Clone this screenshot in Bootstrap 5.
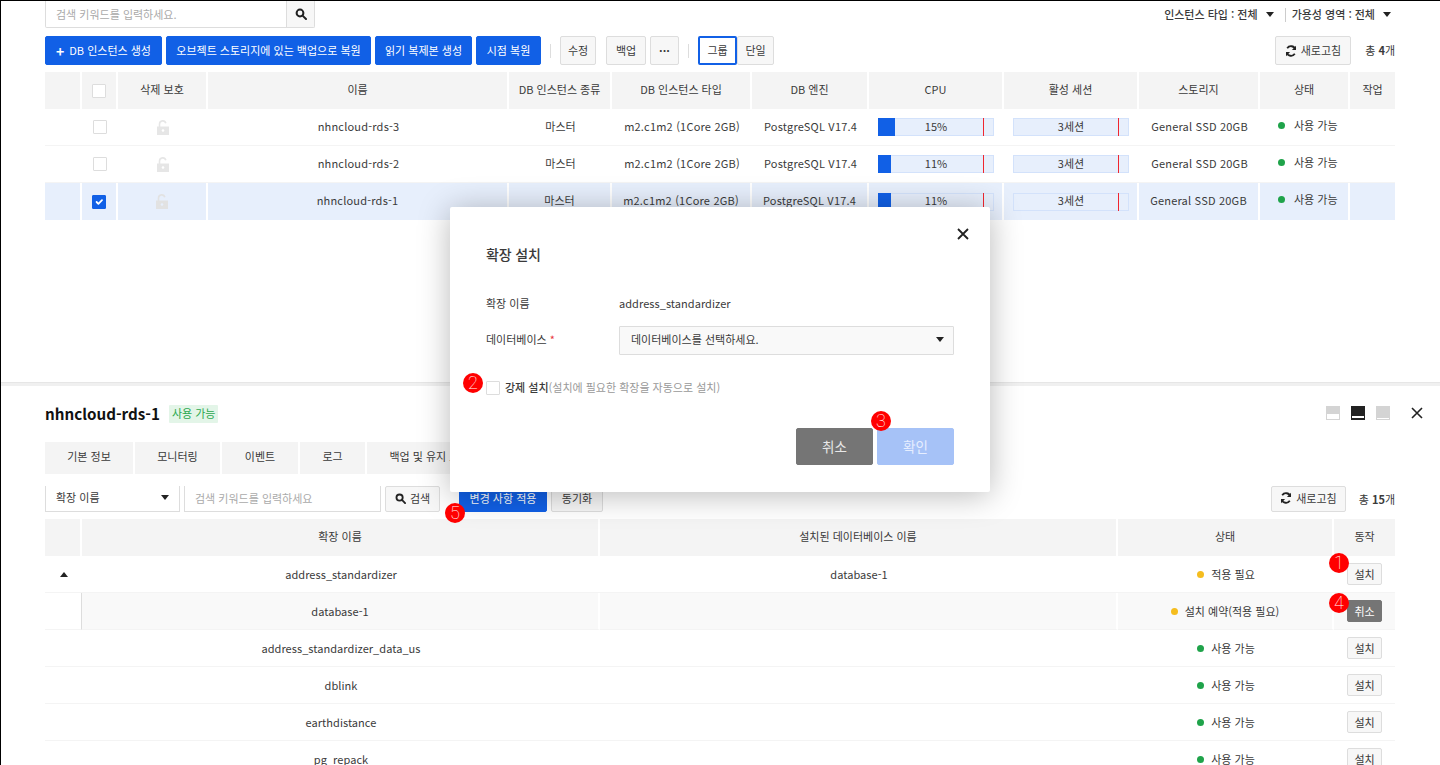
<!DOCTYPE html>
<html lang="ko">
<head>
<meta charset="utf-8">
<title>RDS</title>
<link href="https://cdn.jsdelivr.net/npm/bootstrap@5.3.0/dist/css/bootstrap.min.css" rel="stylesheet">
<style>
html,body{height:765px;overflow:hidden}
body{font-family:"Noto Sans CJK KR",sans-serif;font-size:11px;color:#3a3a3a;background:#fff}
.shell{position:relative;width:1440px;height:765px;overflow:hidden;border-top:1px solid #000;border-left:1px solid #000}
.top-pane{height:381px;padding:0 45px 0 44px}
.pane-rule{height:4px;background:#f0f0f0;border-top:1px solid #e6e6e6}
.low-pane{padding:0 45px 0 44px}
.top-search{width:270px;height:27px;border:1px solid #ddd;border-top:0;border-radius:0 0 2px 2px}
.top-search input,.ph-input{border:0;outline:0;font-size:11px;background:transparent;padding:0 10px;min-width:0;color:#333}
.top-search input::placeholder,.ph-input::placeholder{color:#aaa}
.top-search-btn{width:28px;background:#f7f7f7;border-left:1px solid #ddd}
.filter-row{height:27px}
.filter-sep{width:1px;height:14px;background:#ccc;margin:0 6px 0 11px}
.tri{display:inline-block;width:0;height:0;border-left:4px solid transparent;border-right:4px solid transparent;border-top:5px solid #222}
.tri-up{display:block;margin:0 auto;border-top:0;border-bottom:5px solid #222}
.tool-row{height:29px;margin-top:8px}
.bt{height:100%;display:inline-flex;align-items:center;justify-content:center;font-size:11px;line-height:1;border-radius:2px;padding:0;border:1px solid #ddd;background:#f7f7f7;color:#3a3a3a;white-space:nowrap}
.bt-blue{background:#1160e6;border-color:#1160e6;color:#fff}
.bt-act{border:2px solid #1160e6;background:#fff}
.bw-117{width:117px}.bw-205{width:205px}.bw-97{width:97px}.bw-65{width:65px}.bw-36{width:36px}.bw-40{width:40px}.bw-29{width:29px}.bw-39{width:39px}.bw-37{width:37px}.bw-76{width:76px}
.plus{font-size:14px;line-height:1;margin-right:5px}
.tool-sep{width:1px;height:14px;background:#ddd;margin:0 9px}
.tool-gap{margin-left:4px}
.gap-10{margin-left:10px}
.tot{white-space:nowrap;text-align:right}
.tot-4{width:44px}.tot-15{width:49px}
.tbl{table-layout:fixed;width:1350px;margin:7px 0 0;border-collapse:separate;border-spacing:0;--bs-table-bg:transparent;--bs-table-color:#3a3a3a}
.tbl th,.tbl td{height:37px;padding:0;text-align:center;vertical-align:middle;font-weight:400;font-size:11px;white-space:nowrap;border-bottom:1px solid #f4f4f4;overflow:hidden;box-shadow:none}
.tbl th{background:#f4f4f4;border-right:2px solid #fff;border-bottom:0;padding-bottom:2px}
.tbl th:last-child{border-right:0}
.tbl-a td{padding-bottom:2px}
.tbl-a th:nth-child(2),.tbl-a td:nth-child(2),.tbl-a td:nth-child(3){padding-bottom:0}
.tbl .lat{letter-spacing:.2px}
.tbl-b .lat{letter-spacing:.05px}
.tbl tr.picked td{background:#e7effc;border-right:2px solid #fff;border-bottom:0}
.tbl tr.picked td:last-child{border-right:0}
.tbl-a col:nth-child(1){width:37px}.tbl-a col:nth-child(2){width:36px}.tbl-a col:nth-child(3){width:90px}.tbl-a col:nth-child(4){width:301px}.tbl-a col:nth-child(5){width:103px}.tbl-a col:nth-child(6){width:140px}.tbl-a col:nth-child(7){width:117px}.tbl-a col:nth-child(8){width:135px}.tbl-a col:nth-child(9){width:135px}.tbl-a col:nth-child(10){width:121px}.tbl-a col:nth-child(11){width:90px}.tbl-a col:nth-child(12){width:45px}
.tbl-b col:nth-child(1){width:37px}.tbl-b col:nth-child(2){width:518px}.tbl-b col:nth-child(3){width:518px}.tbl-b col:nth-child(4){width:216px}.tbl-b col:nth-child(5){width:61px}
.tbl .form-check-input{display:block;width:14px;height:14px;margin:0 auto;border:1px solid #ddd;border-radius:1px;float:none}
.tbl .form-check-input:checked{background-color:#1160e6;border-color:#1160e6}
.lock{display:block;margin:0 auto}
.tbl .meter-cell{text-align:left;padding-left:9px;padding-bottom:0}
.meter{position:relative;width:116px;height:18px;background:#e7effc;border:1px solid #d3e2fb;display:flex;align-items:center;justify-content:center;font-size:11px;line-height:1}
.meter-fill{position:absolute;left:-1px;top:-1px;bottom:-1px;background:#1160e6}
.meter-mark{position:absolute;left:104px;top:-1px;bottom:-1px;width:1px;background:#f0262f}
.meter-lbl{position:relative;top:-1px}
.dot{display:inline-block;width:7px;height:7px;border-radius:50%;margin-right:7px;vertical-align:1px}
.dot-g{background:#1fa34a}.dot-y{background:#f5bd1f}
.tbl .st-cell{text-align:left;padding-left:18px}
.st-cell .dot{margin-right:9px}
.up-1{position:relative;top:-1px}
.title-row{height:59px;padding-top:19px}
.rds-name{font-size:15.2px;font-weight:700;color:#111;line-height:20px;margin-top:-2px}
.soft-badge{background:#e3f5e8;color:#2ba84f;font-size:11px;padding:0 3px;height:18px;line-height:17px;margin-left:9px;border-radius:1px;font-weight:400}
.lay{width:14px;height:14px;display:block}
.lay-gap{gap:11px;margin-right:-29px;margin-top:1px}
.lay-x{margin-left:9px}
.tab-row{height:32px;gap:2px;margin-top:-3px}
.tab-i{height:32px;background:#f4f4f4;display:flex;align-items:center;justify-content:center;padding-bottom:3px}
.t88{width:88px}.t85{width:85px}.t76{width:76px}.t65{width:65px}.t125{width:125px}
.search-row{height:26px;margin-top:12px}
.sel-a{width:135px;border:1px solid #ddd;border-top:0;height:100%;padding:0 10px 2px}
.ph-input{width:197px;height:100%;border:1px solid #ddd!important;border-top:0!important;margin:0 4px 0 4px;padding-bottom:2px}
.search-row .bt{height:100%;padding-bottom:2px}
.bw-55{width:55px}.bw-88{width:88px}.bw-52{width:52px}.bw-75{width:75px}
.sp-19{width:19px}
.tbl-b{margin-top:7px}
.tbl-b tr.sub td{background:#f9f9f9}
.tbl-b tr.sub td:first-child{background:#fff;border-right:1px solid #ddd}
.tbl-b tr.sub td:nth-child(2),.tbl-b tr.sub td:nth-child(3),.tbl-b tr.sub td:nth-child(4){border-right:2px solid #fff}
.tbl-b td:nth-child(5){text-align:left;padding-left:13px}
.mini{height:22px;width:35px;font-size:11px}
.mini-dark{background:#757575;border-color:#757575;color:#fff}
.dlg{position:absolute;left:449px;top:206px;width:540px;height:285px;background:#fff;box-shadow:0 3px 32px rgba(0,0,0,.28);border-radius:2px;padding:37px 36px 0}
.dlg-x{position:absolute;right:20px;top:20px;width:14px;height:14px;display:block}
.dlg-title{font-size:14px;font-weight:500;letter-spacing:-.01em;line-height:20px}
.dlg-row{display:flex;align-items:center}
.dlg-lab{width:133px;padding-bottom:2px}
.dlg-val{padding-bottom:2px;letter-spacing:.05px}
.dlg-r1{margin-top:31px;height:18px}
.dlg-r2{margin-top:13px;height:29px}
.dlg-sel{width:335px;height:29px;border:1px solid #ddd;background:#f9f9f9;padding:0 9px 2px 11px;border-radius:1px}
.req{color:#e8353f}
.dlg-chk{margin-top:26px;height:14px}
.dlg-chk .form-check-input{width:14px;height:14px;margin:0 5px 0 0;border:1px solid #ddd;border-radius:1px;float:none}
.dlg-chk b{font-weight:500;position:relative;top:-1px}
.dlg-chk span{color:#999;position:relative;top:-1px}
.dlg-foot{margin-top:33px;height:37px;gap:4px}
.b-77{width:77px;font-size:13.5px}
.b-off{background:#a6c2f7;border-color:#a6c2f7;color:#e6eeff}
.b-grey{background:#757575;border-color:#757575;color:#e8e8e8}
.pin{position:absolute;width:20px;height:20px;border-radius:50%;background:#f00;color:#fff;font-size:18px;font-weight:100;line-height:20px;text-align:center;font-family:Roboto,sans-serif}
.p1{left:1328px;top:552px}.p2{left:462px;top:372px}.p3{left:870px;top:410px}.p4{left:1328px;top:592px}.p5{left:444px;top:502px}
</style>
</head>
<body class="m-0">
<div class="shell">
  <section class="top-pane">
    <div class="filter-row d-flex justify-content-between">
      <div class="top-search d-flex">
        <input class="flex-grow-1" placeholder="검색 키워드를 입력하세요.">
        <div class="top-search-btn d-flex align-items-center justify-content-center">
          <svg width="12" height="12" viewBox="0 0 12 12" fill="none" stroke="#222" stroke-width="2"><circle cx="5" cy="5" r="3.4"/><path d="M7.6 7.6 11 11" stroke-linecap="round"/></svg>
        </div>
      </div>
      <div class="d-flex align-items-center pe-1 fw-medium">
        <span>인스턴스 타입 : 전체</span><i class="tri ms-2"></i>
        <span class="filter-sep"></span><span>가용성 영역 : 전체</span><i class="tri ms-2"></i>
      </div>
    </div>
    <div class="tool-row d-flex align-items-center">
      <button class="btn bt bt-blue bw-117"><b class="plus">+</b>DB 인스턴스 생성</button>
      <button class="btn bt bt-blue bw-205 tool-gap">오브젝트 스토리지에 있는 백업으로 복원</button>
      <button class="btn bt bt-blue bw-97 tool-gap">읽기 복제본 생성</button>
      <button class="btn bt bt-blue bw-65 tool-gap">시점 복원</button>
      <span class="tool-sep"></span>
      <button class="btn bt bw-36">수정</button>
      <button class="btn bt bw-40 gap-10">백업</button>
      <button class="btn bt bw-29 tool-gap fw-bold">···</button>
      <span class="tool-sep"></span>
      <button class="btn bt bt-act bw-39">그룹</button>
      <button class="btn bt bw-37">단일</button>
      <div class="ms-auto d-flex align-items-center h-100">
        <button class="btn bt bw-76">
          <svg class="me-1" width="12" height="12" viewBox="0 0 12 12" fill="none" stroke="#222" stroke-width="1.8"><path d="M10.3 4.2A4.6 4.6 0 0 0 2.2 3.2"/><path d="M1.7 7.8a4.6 4.6 0 0 0 8.1 1"/><path d="M11 .8V5H6.9z" fill="#222" stroke="none"/><path d="M1 11.2V7h4.1z" fill="#222" stroke="none"/></svg>새로고침</button>
        <span class="tot tot-4">총 <b>4</b>개</span>
      </div>
    </div>
    <table class="table tbl tbl-a">
      <colgroup><col><col><col><col><col><col><col><col><col><col><col><col></colgroup>
      <thead><tr><th></th><th><input class="form-check-input" type="checkbox"></th><th>삭제 보호</th><th>이름</th><th>DB 인스턴스 종류</th><th>DB 인스턴스 타입</th><th>DB 엔진</th><th>CPU</th><th>활성 세션</th><th>스토리지</th><th>상태</th><th>작업</th></tr></thead>
      <tbody>
        <tr><td></td><td><input class="form-check-input" type="checkbox"></td><td><svg class="lock" width="12" height="15" viewBox="0 0 12 15"><path d="M2.5 7V4a3.2 3.2 0 0 1 6.3-.7" fill="none" stroke="#e6e6e6" stroke-width="1.6"/><path fill="#e6e6e6" d="M0 6.5h12V15H0z"/><circle cx="6" cy="10.5" r="1.3" fill="#fff"/></svg></td><td class="lat">nhncloud-rds-3</td><td>마스터</td><td class="lat">m2.c1m2 (1Core 2GB)</td><td class="lat">PostgreSQL V17.4</td>
          <td class="meter-cell"><div class="meter"><div class="meter-fill" style="width:15%"></div><span class="meter-mark"></span><span class="meter-lbl">15%</span></div></td>
          <td class="meter-cell"><div class="meter"><span class="meter-mark"></span><span class="meter-lbl">3세션</span></div></td><td class="lat">General SSD 20GB</td><td class="st-cell"><span class="up-1"><i class="dot dot-g"></i>사용 가능</span></td><td></td></tr>
        <tr><td></td><td><input class="form-check-input" type="checkbox"></td><td><svg class="lock" width="12" height="15" viewBox="0 0 12 15"><path d="M2.5 7V4a3.2 3.2 0 0 1 6.3-.7" fill="none" stroke="#e6e6e6" stroke-width="1.6"/><path fill="#e6e6e6" d="M0 6.5h12V15H0z"/><circle cx="6" cy="10.5" r="1.3" fill="#fff"/></svg></td><td class="lat">nhncloud-rds-2</td><td>마스터</td><td class="lat">m2.c1m2 (1Core 2GB)</td><td class="lat">PostgreSQL V17.4</td>
          <td class="meter-cell"><div class="meter"><div class="meter-fill" style="width:11%"></div><span class="meter-mark"></span><span class="meter-lbl">11%</span></div></td>
          <td class="meter-cell"><div class="meter"><span class="meter-mark"></span><span class="meter-lbl">3세션</span></div></td><td class="lat">General SSD 20GB</td><td class="st-cell"><span class="up-1"><i class="dot dot-g"></i>사용 가능</span></td><td></td></tr>
        <tr class="picked"><td></td><td><input class="form-check-input" type="checkbox" checked></td><td><svg class="lock" width="12" height="15" viewBox="0 0 12 15"><path d="M2.5 7V4a3.2 3.2 0 0 1 6.3-.7" fill="none" stroke="#e2e2e2" stroke-width="1.6"/><path fill="#e2e2e2" d="M0 6.5h12V15H0z"/><circle cx="6" cy="10.5" r="1.3" fill="#e7effc"/></svg></td><td class="lat">nhncloud-rds-1</td><td>마스터</td><td class="lat">m2.c1m2 (1Core 2GB)</td><td class="lat">PostgreSQL V17.4</td>
          <td class="meter-cell"><div class="meter"><div class="meter-fill" style="width:11%"></div><span class="meter-mark"></span><span class="meter-lbl">11%</span></div></td>
          <td class="meter-cell"><div class="meter"><span class="meter-mark"></span><span class="meter-lbl">3세션</span></div></td><td class="lat">General SSD 20GB</td><td class="st-cell"><span class="up-1"><i class="dot dot-g"></i>사용 가능</span></td><td></td></tr>
      </tbody>
    </table>
  </section>
  <div class="pane-rule"></div>
  <section class="low-pane">
    <div class="title-row d-flex align-items-start">
      <span class="rds-name">nhncloud-rds-1</span>
      <span class="soft-badge">사용 가능</span>
      <div class="ms-auto d-flex align-items-center lay-gap">
        <svg class="lay" viewBox="0 0 14 14"><path fill="#d4d4d4" d="M0 0h14v14H0z"/><path fill="#fff" d="M1 8h12v5H1z"/></svg>
        <svg class="lay" viewBox="0 0 14 14"><path fill="#222" d="M0 0h14v14H0z"/><path fill="#fff" d="M1 10h12v2H1z"/></svg>
        <svg class="lay" viewBox="0 0 14 14"><path fill="#d4d4d4" d="M0 0h14v14H0z"/><path fill="#fff" d="M1 12h12v1H1z"/></svg>
        <svg class="lay lay-x" viewBox="0 0 14 14" stroke="#222" stroke-width="1.6"><path d="M2 2l10 10M12 2 2 12"/></svg>
      </div>
    </div>
    <div class="tab-row d-flex">
      <div class="tab-i t88">기본 정보</div><div class="tab-i t85">모니터링</div><div class="tab-i t76">이벤트</div><div class="tab-i t65">로그</div><div class="tab-i t125">백업 및 유지 보수</div>
    </div>
    <div class="search-row d-flex align-items-center">
      <div class="sel-a d-flex align-items-center justify-content-between"><span>확장 이름</span><i class="tri"></i></div>
      <input class="ph-input" placeholder="검색 키워드를 입력하세요">
      <button class="btn bt bw-55"><svg class="me-1" width="11" height="11" viewBox="0 0 12 12" fill="none" stroke="#222" stroke-width="2"><circle cx="5" cy="5" r="3.4"/><path d="M7.6 7.6 11 11" stroke-linecap="round"/></svg>검색</button>
      <span class="sp-19"></span>
      <button class="btn bt bt-blue bw-88">변경 사항 적용</button>
      <button class="btn bt bw-52 tool-gap">동기화</button>
      <div class="ms-auto d-flex align-items-center h-100">
        <button class="btn bt bw-75"><svg class="me-1" width="12" height="12" viewBox="0 0 12 12" fill="none" stroke="#222" stroke-width="1.8"><path d="M10.3 4.2A4.6 4.6 0 0 0 2.2 3.2"/><path d="M1.7 7.8a4.6 4.6 0 0 0 8.1 1"/><path d="M11 .8V5H6.9z" fill="#222" stroke="none"/><path d="M1 11.2V7h4.1z" fill="#222" stroke="none"/></svg>새로고침</button>
        <span class="tot tot-15">총 <b>15</b>개</span>
      </div>
    </div>
    <table class="table tbl tbl-b">
      <colgroup><col><col><col><col><col></colgroup>
      <thead><tr><th></th><th>확장 이름</th><th>설치된 데이터베이스 이름</th><th>상태</th><th>동작</th></tr></thead>
      <tbody>
        <tr><td><i class="tri tri-up"></i></td><td class="lat">address_standardizer</td><td class="lat">database-1</td><td><i class="dot dot-y"></i>적용 필요</td><td><button class="btn bt mini">설치</button></td></tr>
        <tr class="sub"><td></td><td class="lat">database-1</td><td></td><td><i class="dot dot-y"></i>설치 예약(적용 필요)</td><td><button class="btn bt mini mini-dark">취소</button></td></tr>
        <tr><td></td><td class="lat">address_standardizer_data_us</td><td></td><td><i class="dot dot-g"></i>사용 가능</td><td><button class="btn bt mini">설치</button></td></tr>
        <tr><td></td><td class="lat">dblink</td><td></td><td><i class="dot dot-g"></i>사용 가능</td><td><button class="btn bt mini">설치</button></td></tr>
        <tr><td></td><td class="lat">earthdistance</td><td></td><td><i class="dot dot-g"></i>사용 가능</td><td><button class="btn bt mini">설치</button></td></tr>
        <tr><td></td><td class="lat">pg_repack</td><td></td><td><i class="dot dot-g"></i>사용 가능</td><td><button class="btn bt mini">설치</button></td></tr>
      </tbody>
    </table>
  </section>

  <div class="dlg">
    <svg class="dlg-x" viewBox="0 0 14 14" stroke="#222" stroke-width="1.8"><path d="M2 2l10 10M12 2 2 12"/></svg>
    <div class="dlg-title">확장 설치</div>
    <div class="dlg-row dlg-r1"><div class="dlg-lab">확장 이름</div><div class="dlg-val">address_standardizer</div></div>
    <div class="dlg-row dlg-r2"><div class="dlg-lab">데이터베이스 <span class="req">*</span></div>
      <div class="dlg-sel d-flex align-items-center justify-content-between"><span>데이터베이스를 선택하세요.</span><i class="tri"></i></div></div>
    <div class="dlg-row dlg-chk"><input class="form-check-input" type="checkbox"><b>강제 설치</b><span>(설치에 필요한 확장을 자동으로 설치)</span></div>
    <div class="dlg-foot d-flex justify-content-end">
      <button class="btn bt b-77 b-grey">취소</button>
      <button class="btn bt b-77 b-off">확인</button>
    </div>
  </div>
  <div class="pin p1">1</div><div class="pin p2">2</div><div class="pin p3">3</div><div class="pin p4">4</div><div class="pin p5">5</div>
</div>
<script src="https://cdn.jsdelivr.net/npm/bootstrap@5.3.0/dist/js/bootstrap.bundle.min.js"></script>
</body>
</html>
